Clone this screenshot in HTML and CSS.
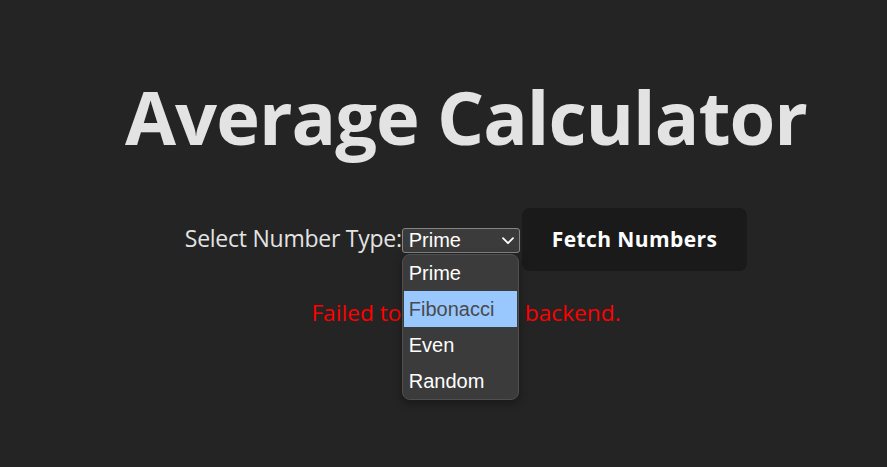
FILE: index.html
```html
<!DOCTYPE html>
<html lang="en">
<head>
<meta charset="utf-8">
<title>Average Calculator</title>
<link rel="stylesheet" href="styles.css">
</head>
<body>
<div class="app">
  <h1 class="title">Average Calculator</h1>
  <div class="controls">
    <label class="label">Select Number Type:</label>
    <div class="select-wrap">
      <div class="select">
        <span class="select-value">Prime</span>
        <svg class="chevron" width="12" height="8" viewBox="0 0 12 8"><path d="M1 1.2 L6 6.2 L11 1.2" fill="none" stroke="#ffffff" stroke-width="1.8" stroke-linecap="round" stroke-linejoin="round"/></svg>
      </div>
      <ul class="popup">
        <li class="option">Prime</li>
        <li class="option option-active">Fibonacci</li>
        <li class="option">Even</li>
        <li class="option">Random</li>
      </ul>
    </div>
    <button class="fetch">Fetch Numbers</button>
  </div>
  <p class="error">Failed to connect to backend.</p>
</div>
</body>
</html>
```
FILE: styles.css
```css
html, body {
  margin: 0;
  padding: 0;
}
body {
  background: #242424;
  min-height: 467px;
  font-family: "Open Sans", "Noto Sans", sans-serif;
  color: #e3e3e3;
}
.app {
  padding: 72px 0 0 45px;
  text-align: center;
}
.title {
  margin: 0;
  font-size: 74px;
  line-height: 89px;
  font-weight: 700;
  letter-spacing: -1px;
  color: #e3e3e3;
}
.controls {
  margin-top: 47px;
  display: flex;
  justify-content: center;
  align-items: baseline;
}
.label {
  font-size: 23px;
  line-height: 30px;
  letter-spacing: -0.25px;
  color: #e3e3e3;
}
.select-wrap {
  position: relative;
  width: 118px;
}
.select {
  box-sizing: border-box;
  width: 118px;
  height: 25px;
  border: 1px solid #858585;
  border-radius: 3px;
  background: #3b3b3b;
  display: flex;
  align-items: baseline;
  justify-content: space-between;
  padding: 0 5px 0 6px;
  font-family: "Liberation Sans", Arial, sans-serif;
  font-size: 20px;
  line-height: 23px;
  color: #ffffff;
  text-align: left;
}
.chevron {
  align-self: center;
}
.popup {
  position: absolute;
  top: 26px;
  left: 0;
  box-sizing: border-box;
  width: 117px;
  margin: 0;
  padding: 0 1px;
  list-style: none;
  background: #3b3b3b;
  border: 1px solid #4f4f4f;
  border-radius: 8px;
  box-shadow: 0 3px 10px rgba(0, 0, 0, 0.35);
  font-family: "Liberation Sans", Arial, sans-serif;
  font-size: 20px;
  text-align: left;
}
.option {
  height: 36px;
  line-height: 36px;
  padding-left: 5px;
  color: #ffffff;
}
.option-active {
  background: #99c8ff;
  color: #4a4a4a;
}
.fetch {
  margin-left: 2px;
  height: 63px;
  padding: 0 30px;
  border: none;
  border-radius: 8px;
  background: #1a1a1a;
  color: #ffffff;
  font-family: "Open Sans", "Noto Sans", sans-serif;
  font-size: 21px;
  font-weight: 700;
  letter-spacing: 0.4px;
  line-height: 63px;
}
.error {
  margin: 27px 0 0;
  font-size: 22.7px;
  line-height: 30px;
  color: #ff0000;
}
```
